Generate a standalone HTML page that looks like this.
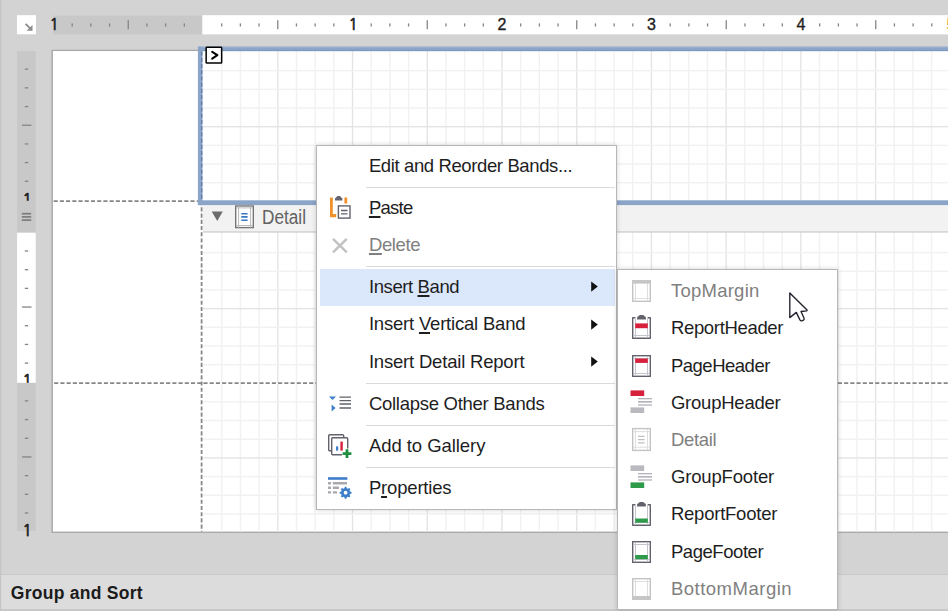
<!DOCTYPE html>
<html lang="en"><head><meta charset="utf-8"><title>Report Designer - Insert Band</title>
<style>
html,body{margin:0;padding:0;}
body{width:948px;height:611px;overflow:hidden;background:#d3d3d3;position:relative;font-family:"Liberation Sans",sans-serif;font-size:18px;color:#1e1e1e;}
.bg{position:absolute;left:0;top:0;display:block;}
.abs{position:absolute;}
.menu{position:absolute;background:#fff;border:1.5px solid #b7b7b7;box-sizing:border-box;box-shadow:0 0 5px rgba(0,0,0,0.17);}
.row{position:absolute;left:0;height:22px;line-height:22px;white-space:nowrap;font-size:18.5px;}
.t{display:inline-block;}
.dis{color:#808080;}
.sep{position:absolute;height:1px;background:#dadada;}
.hl{position:absolute;background:#dbe7fb;}
.ico{position:absolute;display:block;line-height:0;}
.ico svg{display:block;}
.arrow{position:absolute;width:0;height:0;border-left:6.5px solid #111;border-top:5.5px solid transparent;border-bottom:5.5px solid transparent;}
u{text-decoration:underline;text-decoration-thickness:1.5px;text-underline-offset:2.2px;}
</style></head><body>
<svg class="bg" width="948" height="611" viewBox="0 0 948 611" shape-rendering="auto"><rect x="51.5" y="49.8" width="897" height="483.1" fill="#a6a6a6"/>
<rect x="52.9" y="51" width="896" height="480.6" fill="#ffffff"/>
<rect x="221.08" y="51" width="1.4" height="149" fill="#f1f1f1"/>
<rect x="239.76" y="51" width="1.4" height="149" fill="#f1f1f1"/>
<rect x="258.44" y="51" width="1.4" height="149" fill="#f1f1f1"/>
<rect x="277.12" y="51" width="1.4" height="149" fill="#e4e4e4"/>
<rect x="295.80" y="51" width="1.4" height="149" fill="#f1f1f1"/>
<rect x="314.48" y="51" width="1.4" height="149" fill="#f1f1f1"/>
<rect x="333.16" y="51" width="1.4" height="149" fill="#f1f1f1"/>
<rect x="351.84" y="51" width="1.4" height="149" fill="#e4e4e4"/>
<rect x="370.52" y="51" width="1.4" height="149" fill="#f1f1f1"/>
<rect x="389.20" y="51" width="1.4" height="149" fill="#f1f1f1"/>
<rect x="407.88" y="51" width="1.4" height="149" fill="#f1f1f1"/>
<rect x="426.56" y="51" width="1.4" height="149" fill="#e4e4e4"/>
<rect x="445.24" y="51" width="1.4" height="149" fill="#f1f1f1"/>
<rect x="463.92" y="51" width="1.4" height="149" fill="#f1f1f1"/>
<rect x="482.60" y="51" width="1.4" height="149" fill="#f1f1f1"/>
<rect x="501.28" y="51" width="1.4" height="149" fill="#e4e4e4"/>
<rect x="519.96" y="51" width="1.4" height="149" fill="#f1f1f1"/>
<rect x="538.64" y="51" width="1.4" height="149" fill="#f1f1f1"/>
<rect x="557.32" y="51" width="1.4" height="149" fill="#f1f1f1"/>
<rect x="576.00" y="51" width="1.4" height="149" fill="#e4e4e4"/>
<rect x="594.68" y="51" width="1.4" height="149" fill="#f1f1f1"/>
<rect x="613.36" y="51" width="1.4" height="149" fill="#f1f1f1"/>
<rect x="632.04" y="51" width="1.4" height="149" fill="#f1f1f1"/>
<rect x="650.72" y="51" width="1.4" height="149" fill="#e4e4e4"/>
<rect x="669.40" y="51" width="1.4" height="149" fill="#f1f1f1"/>
<rect x="688.08" y="51" width="1.4" height="149" fill="#f1f1f1"/>
<rect x="706.76" y="51" width="1.4" height="149" fill="#f1f1f1"/>
<rect x="725.44" y="51" width="1.4" height="149" fill="#e4e4e4"/>
<rect x="744.12" y="51" width="1.4" height="149" fill="#f1f1f1"/>
<rect x="762.80" y="51" width="1.4" height="149" fill="#f1f1f1"/>
<rect x="781.48" y="51" width="1.4" height="149" fill="#f1f1f1"/>
<rect x="800.16" y="51" width="1.4" height="149" fill="#e4e4e4"/>
<rect x="818.84" y="51" width="1.4" height="149" fill="#f1f1f1"/>
<rect x="837.52" y="51" width="1.4" height="149" fill="#f1f1f1"/>
<rect x="856.20" y="51" width="1.4" height="149" fill="#f1f1f1"/>
<rect x="874.88" y="51" width="1.4" height="149" fill="#e4e4e4"/>
<rect x="893.56" y="51" width="1.4" height="149" fill="#f1f1f1"/>
<rect x="912.24" y="51" width="1.4" height="149" fill="#f1f1f1"/>
<rect x="930.92" y="51" width="1.4" height="149" fill="#f1f1f1"/>
<rect x="203" y="69.98" width="745" height="1.4" fill="#f1f1f1"/>
<rect x="203" y="88.66" width="745" height="1.4" fill="#f1f1f1"/>
<rect x="203" y="107.34" width="745" height="1.4" fill="#f1f1f1"/>
<rect x="203" y="126.02" width="745" height="1.4" fill="#e4e4e4"/>
<rect x="203" y="144.70" width="745" height="1.4" fill="#f1f1f1"/>
<rect x="203" y="163.38" width="745" height="1.4" fill="#f1f1f1"/>
<rect x="203" y="182.06" width="745" height="1.4" fill="#f1f1f1"/>
<rect x="221.08" y="232" width="1.4" height="151" fill="#f1f1f1"/>
<rect x="239.76" y="232" width="1.4" height="151" fill="#f1f1f1"/>
<rect x="258.44" y="232" width="1.4" height="151" fill="#f1f1f1"/>
<rect x="277.12" y="232" width="1.4" height="151" fill="#e4e4e4"/>
<rect x="295.80" y="232" width="1.4" height="151" fill="#f1f1f1"/>
<rect x="314.48" y="232" width="1.4" height="151" fill="#f1f1f1"/>
<rect x="333.16" y="232" width="1.4" height="151" fill="#f1f1f1"/>
<rect x="351.84" y="232" width="1.4" height="151" fill="#e4e4e4"/>
<rect x="370.52" y="232" width="1.4" height="151" fill="#f1f1f1"/>
<rect x="389.20" y="232" width="1.4" height="151" fill="#f1f1f1"/>
<rect x="407.88" y="232" width="1.4" height="151" fill="#f1f1f1"/>
<rect x="426.56" y="232" width="1.4" height="151" fill="#e4e4e4"/>
<rect x="445.24" y="232" width="1.4" height="151" fill="#f1f1f1"/>
<rect x="463.92" y="232" width="1.4" height="151" fill="#f1f1f1"/>
<rect x="482.60" y="232" width="1.4" height="151" fill="#f1f1f1"/>
<rect x="501.28" y="232" width="1.4" height="151" fill="#e4e4e4"/>
<rect x="519.96" y="232" width="1.4" height="151" fill="#f1f1f1"/>
<rect x="538.64" y="232" width="1.4" height="151" fill="#f1f1f1"/>
<rect x="557.32" y="232" width="1.4" height="151" fill="#f1f1f1"/>
<rect x="576.00" y="232" width="1.4" height="151" fill="#e4e4e4"/>
<rect x="594.68" y="232" width="1.4" height="151" fill="#f1f1f1"/>
<rect x="613.36" y="232" width="1.4" height="151" fill="#f1f1f1"/>
<rect x="632.04" y="232" width="1.4" height="151" fill="#f1f1f1"/>
<rect x="650.72" y="232" width="1.4" height="151" fill="#e4e4e4"/>
<rect x="669.40" y="232" width="1.4" height="151" fill="#f1f1f1"/>
<rect x="688.08" y="232" width="1.4" height="151" fill="#f1f1f1"/>
<rect x="706.76" y="232" width="1.4" height="151" fill="#f1f1f1"/>
<rect x="725.44" y="232" width="1.4" height="151" fill="#e4e4e4"/>
<rect x="744.12" y="232" width="1.4" height="151" fill="#f1f1f1"/>
<rect x="762.80" y="232" width="1.4" height="151" fill="#f1f1f1"/>
<rect x="781.48" y="232" width="1.4" height="151" fill="#f1f1f1"/>
<rect x="800.16" y="232" width="1.4" height="151" fill="#e4e4e4"/>
<rect x="818.84" y="232" width="1.4" height="151" fill="#f1f1f1"/>
<rect x="837.52" y="232" width="1.4" height="151" fill="#f1f1f1"/>
<rect x="856.20" y="232" width="1.4" height="151" fill="#f1f1f1"/>
<rect x="874.88" y="232" width="1.4" height="151" fill="#e4e4e4"/>
<rect x="893.56" y="232" width="1.4" height="151" fill="#f1f1f1"/>
<rect x="912.24" y="232" width="1.4" height="151" fill="#f1f1f1"/>
<rect x="930.92" y="232" width="1.4" height="151" fill="#f1f1f1"/>
<rect x="203" y="251.88" width="745" height="1.4" fill="#f1f1f1"/>
<rect x="203" y="270.56" width="745" height="1.4" fill="#f1f1f1"/>
<rect x="203" y="289.24" width="745" height="1.4" fill="#f1f1f1"/>
<rect x="203" y="307.92" width="745" height="1.4" fill="#e4e4e4"/>
<rect x="203" y="326.60" width="745" height="1.4" fill="#f1f1f1"/>
<rect x="203" y="345.28" width="745" height="1.4" fill="#f1f1f1"/>
<rect x="203" y="363.96" width="745" height="1.4" fill="#f1f1f1"/>
<rect x="221.08" y="384" width="1.4" height="147.60000000000002" fill="#f1f1f1"/>
<rect x="239.76" y="384" width="1.4" height="147.60000000000002" fill="#f1f1f1"/>
<rect x="258.44" y="384" width="1.4" height="147.60000000000002" fill="#f1f1f1"/>
<rect x="277.12" y="384" width="1.4" height="147.60000000000002" fill="#e4e4e4"/>
<rect x="295.80" y="384" width="1.4" height="147.60000000000002" fill="#f1f1f1"/>
<rect x="314.48" y="384" width="1.4" height="147.60000000000002" fill="#f1f1f1"/>
<rect x="333.16" y="384" width="1.4" height="147.60000000000002" fill="#f1f1f1"/>
<rect x="351.84" y="384" width="1.4" height="147.60000000000002" fill="#e4e4e4"/>
<rect x="370.52" y="384" width="1.4" height="147.60000000000002" fill="#f1f1f1"/>
<rect x="389.20" y="384" width="1.4" height="147.60000000000002" fill="#f1f1f1"/>
<rect x="407.88" y="384" width="1.4" height="147.60000000000002" fill="#f1f1f1"/>
<rect x="426.56" y="384" width="1.4" height="147.60000000000002" fill="#e4e4e4"/>
<rect x="445.24" y="384" width="1.4" height="147.60000000000002" fill="#f1f1f1"/>
<rect x="463.92" y="384" width="1.4" height="147.60000000000002" fill="#f1f1f1"/>
<rect x="482.60" y="384" width="1.4" height="147.60000000000002" fill="#f1f1f1"/>
<rect x="501.28" y="384" width="1.4" height="147.60000000000002" fill="#e4e4e4"/>
<rect x="519.96" y="384" width="1.4" height="147.60000000000002" fill="#f1f1f1"/>
<rect x="538.64" y="384" width="1.4" height="147.60000000000002" fill="#f1f1f1"/>
<rect x="557.32" y="384" width="1.4" height="147.60000000000002" fill="#f1f1f1"/>
<rect x="576.00" y="384" width="1.4" height="147.60000000000002" fill="#e4e4e4"/>
<rect x="594.68" y="384" width="1.4" height="147.60000000000002" fill="#f1f1f1"/>
<rect x="613.36" y="384" width="1.4" height="147.60000000000002" fill="#f1f1f1"/>
<rect x="632.04" y="384" width="1.4" height="147.60000000000002" fill="#f1f1f1"/>
<rect x="650.72" y="384" width="1.4" height="147.60000000000002" fill="#e4e4e4"/>
<rect x="669.40" y="384" width="1.4" height="147.60000000000002" fill="#f1f1f1"/>
<rect x="688.08" y="384" width="1.4" height="147.60000000000002" fill="#f1f1f1"/>
<rect x="706.76" y="384" width="1.4" height="147.60000000000002" fill="#f1f1f1"/>
<rect x="725.44" y="384" width="1.4" height="147.60000000000002" fill="#e4e4e4"/>
<rect x="744.12" y="384" width="1.4" height="147.60000000000002" fill="#f1f1f1"/>
<rect x="762.80" y="384" width="1.4" height="147.60000000000002" fill="#f1f1f1"/>
<rect x="781.48" y="384" width="1.4" height="147.60000000000002" fill="#f1f1f1"/>
<rect x="800.16" y="384" width="1.4" height="147.60000000000002" fill="#e4e4e4"/>
<rect x="818.84" y="384" width="1.4" height="147.60000000000002" fill="#f1f1f1"/>
<rect x="837.52" y="384" width="1.4" height="147.60000000000002" fill="#f1f1f1"/>
<rect x="856.20" y="384" width="1.4" height="147.60000000000002" fill="#f1f1f1"/>
<rect x="874.88" y="384" width="1.4" height="147.60000000000002" fill="#e4e4e4"/>
<rect x="893.56" y="384" width="1.4" height="147.60000000000002" fill="#f1f1f1"/>
<rect x="912.24" y="384" width="1.4" height="147.60000000000002" fill="#f1f1f1"/>
<rect x="930.92" y="384" width="1.4" height="147.60000000000002" fill="#f1f1f1"/>
<rect x="203" y="401.18" width="745" height="1.4" fill="#f1f1f1"/>
<rect x="203" y="419.86" width="745" height="1.4" fill="#f1f1f1"/>
<rect x="203" y="438.54" width="745" height="1.4" fill="#f1f1f1"/>
<rect x="203" y="457.22" width="745" height="1.4" fill="#e4e4e4"/>
<rect x="203" y="475.90" width="745" height="1.4" fill="#f1f1f1"/>
<rect x="203" y="494.58" width="745" height="1.4" fill="#f1f1f1"/>
<rect x="203" y="513.26" width="745" height="1.4" fill="#f1f1f1"/>
<rect x="203" y="205" width="745" height="27" fill="#f2f2f2"/>
<rect x="203" y="231.2" width="745" height="1.5" fill="#d2d2d2"/>
<line x1="201.6" y1="205.1" x2="201.6" y2="531.4" stroke="#868686" stroke-width="1.75" stroke-dasharray="4.1 2.12" stroke-dashoffset="3.96"/>
<line x1="53" y1="201.2" x2="198" y2="201.2" stroke="#868686" stroke-width="1.75" stroke-dasharray="4.1 2.12" stroke-dashoffset="5.6"/>
<line x1="53" y1="383.2" x2="948" y2="383.2" stroke="#868686" stroke-width="1.75" stroke-dasharray="4.1 2.12" stroke-dashoffset="5.06"/>
<rect x="198" y="46.7" width="750" height="4.4" fill="#8ba5c9"/>
<rect x="202.5" y="49.9" width="746" height="1.2" fill="#7f98be"/>
<rect x="198" y="46.7" width="750" height="1.1" fill="#9bb0cf"/>
<rect x="197.9" y="46.7" width="4.6" height="158.4" fill="#8ba5c9"/>
<rect x="197.9" y="200.3" width="751" height="4.8" fill="#8ba5c9"/>
<line x1="201.7" y1="51.5" x2="201.7" y2="200.4" stroke="#5f7ba6" stroke-width="1.3" stroke-dasharray="4.1 2.12"/>
<rect x="206.15" y="47.3" width="15.5" height="15.7" rx="0.6" fill="#fff" stroke="#000" stroke-width="1.5"/>
<path d="M212.2 51.8 L217.4 55.2 L212.2 58.6" fill="none" stroke="#000" stroke-width="2" stroke-linejoin="round" stroke-linecap="round"/>
<path d="M211.7 211.5 L222.8 211.5 L217.25 221 Z" fill="#6c6c6c"/>
<g transform="translate(235,205.3)"><rect x="0.7" y="0.7" width="17.6" height="21.6" fill="#fff" stroke="#727272" stroke-width="1.35"/><path d="M3.6 1 V22.4 M15.6 1 V22.4 M1 2.6 H18 M1 20.2 H18" stroke="#b9b9b9" stroke-width="1" fill="none"/><path d="M6.3 8.4 H12.6 M6.3 11.6 H12.6 M6.3 14.9 H12.6" stroke="#3b78c4" stroke-width="1.6" fill="none"/></g>
<rect x="17" y="15.2" width="19" height="19.1" fill="#fff"/>
<path d="M25.6 23.9 L30.6 28.9" fill="none" stroke="#8c8c8c" stroke-width="1.9"/>
<path d="M32.5 24.9 V30.7 H26.5 Z" fill="#8c8c8c"/>
<rect x="53" y="15.6" width="149.3" height="18.8" fill="#c8c8c8"/>
<rect x="202.3" y="15.2" width="746" height="19.2" fill="#fff"/>
<rect x="17.1" y="51.2" width="18.6" height="181.5" fill="#c8c8c8"/>
<rect x="17.1" y="232.7" width="18.6" height="150.2" fill="#fff"/>
<rect x="17.1" y="382.9" width="18.6" height="148.1" fill="#c8c8c8"/>
<defs><clipPath id="c1"><rect x="10" y="180" width="40" height="20.7"/></clipPath><clipPath id="c2"><rect x="10" y="360" width="40" height="22.7"/></clipPath></defs>
<text x="54.1" y="29.6" font-family="NanumGothic, Liberation Sans, sans-serif" font-size="15.5" fill="#222" stroke="#222" stroke-width="0.7" text-anchor="middle">1</text>
<rect x="71.54" y="23.4" width="1.3" height="3.1" fill="#858585"/>
<rect x="90.22" y="23.4" width="1.3" height="3.1" fill="#858585"/>
<rect x="108.91" y="23.4" width="1.3" height="3.1" fill="#858585"/>
<rect x="127.60" y="20.2" width="1.3" height="9" fill="#858585"/>
<rect x="146.29" y="23.4" width="1.3" height="3.1" fill="#858585"/>
<rect x="164.97" y="23.4" width="1.3" height="3.1" fill="#858585"/>
<rect x="183.66" y="23.4" width="1.3" height="3.1" fill="#858585"/>
<rect x="221.04" y="23.4" width="1.3" height="3.1" fill="#858585"/>
<rect x="239.72" y="23.4" width="1.3" height="3.1" fill="#858585"/>
<rect x="258.41" y="23.4" width="1.3" height="3.1" fill="#858585"/>
<rect x="277.10" y="20.2" width="1.3" height="9" fill="#858585"/>
<rect x="295.79" y="23.4" width="1.3" height="3.1" fill="#858585"/>
<rect x="314.48" y="23.4" width="1.3" height="3.1" fill="#858585"/>
<rect x="333.16" y="23.4" width="1.3" height="3.1" fill="#858585"/>
<text x="353.1" y="29.6" font-family="NanumGothic, Liberation Sans, sans-serif" font-size="15.5" fill="#222" stroke="#222" stroke-width="0.7" text-anchor="middle">1</text>
<rect x="370.54" y="23.4" width="1.3" height="3.1" fill="#858585"/>
<rect x="389.23" y="23.4" width="1.3" height="3.1" fill="#858585"/>
<rect x="407.91" y="23.4" width="1.3" height="3.1" fill="#858585"/>
<rect x="426.60" y="20.2" width="1.3" height="9" fill="#858585"/>
<rect x="445.29" y="23.4" width="1.3" height="3.1" fill="#858585"/>
<rect x="463.98" y="23.4" width="1.3" height="3.1" fill="#858585"/>
<rect x="482.66" y="23.4" width="1.3" height="3.1" fill="#858585"/>
<text x="502.0" y="29.6" font-family="Liberation Sans, sans-serif" font-size="16" fill="#222" stroke="#222" stroke-width="0.35" text-anchor="middle">2</text>
<rect x="520.04" y="23.4" width="1.3" height="3.1" fill="#858585"/>
<rect x="538.73" y="23.4" width="1.3" height="3.1" fill="#858585"/>
<rect x="557.41" y="23.4" width="1.3" height="3.1" fill="#858585"/>
<rect x="576.10" y="20.2" width="1.3" height="9" fill="#858585"/>
<rect x="594.79" y="23.4" width="1.3" height="3.1" fill="#858585"/>
<rect x="613.48" y="23.4" width="1.3" height="3.1" fill="#858585"/>
<rect x="632.16" y="23.4" width="1.3" height="3.1" fill="#858585"/>
<text x="651.5" y="29.6" font-family="Liberation Sans, sans-serif" font-size="16" fill="#222" stroke="#222" stroke-width="0.35" text-anchor="middle">3</text>
<rect x="669.54" y="23.4" width="1.3" height="3.1" fill="#858585"/>
<rect x="688.23" y="23.4" width="1.3" height="3.1" fill="#858585"/>
<rect x="706.91" y="23.4" width="1.3" height="3.1" fill="#858585"/>
<rect x="725.60" y="20.2" width="1.3" height="9" fill="#858585"/>
<rect x="744.29" y="23.4" width="1.3" height="3.1" fill="#858585"/>
<rect x="762.98" y="23.4" width="1.3" height="3.1" fill="#858585"/>
<rect x="781.66" y="23.4" width="1.3" height="3.1" fill="#858585"/>
<text x="801.0" y="29.6" font-family="Liberation Sans, sans-serif" font-size="16" fill="#222" stroke="#222" stroke-width="0.35" text-anchor="middle">4</text>
<rect x="819.04" y="23.4" width="1.3" height="3.1" fill="#858585"/>
<rect x="837.73" y="23.4" width="1.3" height="3.1" fill="#858585"/>
<rect x="856.41" y="23.4" width="1.3" height="3.1" fill="#858585"/>
<rect x="875.10" y="20.2" width="1.3" height="9" fill="#858585"/>
<rect x="893.79" y="23.4" width="1.3" height="3.1" fill="#858585"/>
<rect x="912.48" y="23.4" width="1.3" height="3.1" fill="#858585"/>
<rect x="931.16" y="23.4" width="1.3" height="3.1" fill="#858585"/>
<text x="951.0" y="29.6" font-family="Liberation Sans, sans-serif" font-size="16" fill="#e9a23b" stroke="#e9a23b" stroke-width="0.35" text-anchor="middle">5</text>
<rect x="24.8" y="68.54" width="3.4" height="1.3" fill="#858585"/>
<rect x="24.8" y="87.22" width="3.4" height="1.3" fill="#858585"/>
<rect x="24.8" y="105.91" width="3.4" height="1.3" fill="#858585"/>
<rect x="22" y="124.60" width="9.5" height="1.3" fill="#858585"/>
<rect x="24.8" y="143.29" width="3.4" height="1.3" fill="#858585"/>
<rect x="24.8" y="161.97" width="3.4" height="1.3" fill="#858585"/>
<rect x="24.8" y="180.66" width="3.4" height="1.3" fill="#858585"/>
<g clip-path="url(#c1)"><text x="27.1" y="204.6" font-family="NanumGothic, Liberation Sans, sans-serif" font-size="15.5" fill="#222" stroke="#222" stroke-width="0.75" text-anchor="middle">1</text></g>
<rect x="24.8" y="250.34" width="3.4" height="1.3" fill="#858585"/>
<rect x="24.8" y="269.03" width="3.4" height="1.3" fill="#858585"/>
<rect x="24.8" y="287.71" width="3.4" height="1.3" fill="#858585"/>
<rect x="22" y="306.40" width="9.5" height="1.3" fill="#858585"/>
<rect x="24.8" y="325.09" width="3.4" height="1.3" fill="#858585"/>
<rect x="24.8" y="343.78" width="3.4" height="1.3" fill="#858585"/>
<rect x="24.8" y="362.46" width="3.4" height="1.3" fill="#858585"/>
<g clip-path="url(#c2)"><text x="27.1" y="386.4" font-family="NanumGothic, Liberation Sans, sans-serif" font-size="15.5" fill="#222" stroke="#222" stroke-width="0.75" text-anchor="middle">1</text></g>
<rect x="24.8" y="400.24" width="3.4" height="1.3" fill="#858585"/>
<rect x="24.8" y="418.93" width="3.4" height="1.3" fill="#858585"/>
<rect x="24.8" y="437.61" width="3.4" height="1.3" fill="#858585"/>
<rect x="22" y="456.30" width="9.5" height="1.3" fill="#858585"/>
<rect x="24.8" y="474.99" width="3.4" height="1.3" fill="#858585"/>
<rect x="24.8" y="493.68" width="3.4" height="1.3" fill="#858585"/>
<rect x="24.8" y="512.36" width="3.4" height="1.3" fill="#858585"/>
<g><text x="27.1" y="536.3" font-family="NanumGothic, Liberation Sans, sans-serif" font-size="15.5" fill="#222" stroke="#222" stroke-width="0.75" text-anchor="middle">1</text></g>
<rect x="21.8" y="212.85" width="9.4" height="1.7" fill="#7c7c7c"/>
<rect x="21.8" y="216.05" width="9.4" height="1.7" fill="#7c7c7c"/>
<rect x="21.8" y="219.25" width="9.4" height="1.7" fill="#7c7c7c"/>
<rect x="0" y="574" width="948" height="1" fill="#c9c9c9"/>
<rect x="0" y="575" width="948" height="34" fill="#dcdcdc"/>
<rect x="0" y="609.2" width="948" height="2" fill="#c6c6c6"/>
<rect x="0" y="0" width="1.25" height="611" fill="#c5c5c5"/></svg>
<div class="abs" style="left:262.4px;top:203.9px;height:27px;line-height:26px;font-size:19.6px;color:#626262;white-space:nowrap;transform:scaleX(0.878);transform-origin:0 50%">Detail</div>
<div class="abs" style="left:10.8px;top:580.8px;height:24px;line-height:24px;font-weight:bold;font-size:17.5px;color:#1b1b1b;letter-spacing:0.27px">Group and Sort</div>

<div class="menu" style="left:315.9px;top:144.9px;width:301.6px;height:364.9px"></div>
<div class="hl" style="left:319.6px;top:269.1px;width:295.2px;height:36.7px"></div>
<div class="sep" style="left:366px;top:187.1px;width:248.70000000000005px"></div>
<div class="sep" style="left:366px;top:266.3px;width:248.70000000000005px"></div>
<div class="sep" style="left:366px;top:383.2px;width:248.70000000000005px"></div>
<div class="sep" style="left:366px;top:425.2px;width:248.70000000000005px"></div>
<div class="sep" style="left:366px;top:467.2px;width:248.70000000000005px"></div>
<div class="row" style="left:368.9px;top:154.7px"><span class="t" style="letter-spacing:-0.382px">Edit and Reorder Bands...</span></div>
<div class="row" style="left:368.9px;top:196.8px"><span class="t" style="letter-spacing:-0.736px"><u>P</u>aste</span></div>
<div class="ico" style="left:330px;top:196px"><svg width="22" height="24" viewBox="0 0 22 24"><path d="M0 1.5 H2.8 V18 H6.2 V21.2 H0 Z" fill="#f0912b"/><rect x="14.4" y="1.5" width="2.8" height="6" fill="#f0912b"/><path d="M5 4.4 V2.6 Q5 1.8 6 1.7 L6.5 0.9 Q6.9 0.1 7.9 0.1 H9.5 Q10.5 0.1 10.9 0.9 L11.4 1.7 Q12.4 1.8 12.4 2.6 V4.4 Z" fill="#65656f"/><rect x="8.4" y="9.9" width="11.6" height="12.2" fill="#fff" stroke="#62626c" stroke-width="1.4"/><path d="M11 14.5 H17.5 M11 17.8 H17.5" stroke="#62626c" stroke-width="1.3"/></svg></div>
<div class="row dis" style="left:368.9px;top:234.2px"><span class="t" style="letter-spacing:-0.374px"><u>D</u>elete</span></div>
<div class="ico" style="left:330.5px;top:237px"><svg width="18" height="18" viewBox="0 0 18 18"><path d="M2 1.9 L15.8 15.3 M15.8 1.9 L2 15.3" stroke="#c2c2c2" stroke-width="2.5" fill="none"/></svg></div>
<div class="row" style="left:368.9px;top:276.4px"><span class="t" style="letter-spacing:-0.396px">Insert <u>B</u>and</span></div>
<div class="ico" style="left:590px;top:280.2px"><svg width="10" height="14" viewBox="0 0 10 14"><path d="M1.2 1.4 L7.8 6.6 L1.2 11.8 Z" fill="#111"/></svg></div>
<div class="row" style="left:368.9px;top:312.8px"><span class="t" style="letter-spacing:-0.197px">Insert <u>V</u>ertical Band</span></div>
<div class="ico" style="left:590px;top:317.6px"><svg width="10" height="14" viewBox="0 0 10 14"><path d="M1.2 1.4 L7.8 6.6 L1.2 11.8 Z" fill="#111"/></svg></div>
<div class="row" style="left:368.9px;top:351.2px"><span class="t" style="letter-spacing:-0.195px">Insert Detail Report</span></div>
<div class="ico" style="left:590px;top:355.0px"><svg width="10" height="14" viewBox="0 0 10 14"><path d="M1.2 1.4 L7.8 6.6 L1.2 11.8 Z" fill="#111"/></svg></div>
<div class="row" style="left:368.9px;top:393.0px"><span class="t" style="letter-spacing:-0.275px">Collapse Other Bands</span></div>
<div class="ico" style="left:328.6px;top:396.2px"><svg width="23" height="16" viewBox="0 0 23 16"><path d="M0 0.6 H7 L3.5 4 Z" fill="#3d7ecb"/><path d="M2.6 8.4 L6.6 12 L2.6 15.6 Z" fill="#3d7ecb"/><path d="M10.5 1.2 H22 M10.5 4.6 H22 M10.5 8 H22 M10.5 12 H22" stroke="#62626c" stroke-width="1.3"/></svg></div>
<div class="row" style="left:368.9px;top:435.0px"><span class="t" style="letter-spacing:-0.055px">Add to Gallery</span></div>
<div class="ico" style="left:328.2px;top:433.6px"><svg width="24" height="25" viewBox="0 0 24 25"><rect x="0.7" y="0.7" width="15" height="16" rx="1" fill="#fff" stroke="#62626c" stroke-width="1.4"/><rect x="3.7" y="3.7" width="16" height="17" rx="1" fill="#fff" stroke="#62626c" stroke-width="1.4"/><rect x="8" y="12.4" width="2.2" height="4.2" fill="#3d7ecb"/><rect x="12.4" y="7.6" width="2.4" height="9" fill="#d6203c"/><path d="M19 14.6 V24.6 M14 19.6 H24" stroke="#fff" stroke-width="4.8"/><path d="M19 15.2 V24 M14.6 19.6 H23.4" stroke="#1f8f3f" stroke-width="2.8"/></svg></div>
<div class="row" style="left:368.9px;top:477.0px"><span class="t" style="letter-spacing:-0.178px">P<u>r</u>operties</span></div>
<div class="ico" style="left:328px;top:476.8px"><svg width="25" height="24" viewBox="0 0 25 24"><rect x="0" y="0.2" width="19.4" height="2.6" fill="#3d7ecb"/><path d="M0 6.2 H3 M4.8 6.2 H19 M0 10.8 H3 M4.8 10.8 H11 M0 15.4 H3 M4.8 15.4 H9" stroke="#a8a8ae" stroke-width="2.4"/><circle cx="17.6" cy="15.7" r="7.2" fill="#fff"/><path d="M23.55 14.92 L23.55 16.48 L22.04 16.90 L21.59 17.99 L22.36 19.36 L21.26 20.46 L19.89 19.69 L18.80 20.14 L18.38 21.65 L16.82 21.65 L16.40 20.14 L15.31 19.69 L13.94 20.46 L12.84 19.36 L13.61 17.99 L13.16 16.90 L11.65 16.48 L11.65 14.92 L13.16 14.50 L13.61 13.41 L12.84 12.04 L13.94 10.94 L15.31 11.71 L16.40 11.26 L16.82 9.75 L18.38 9.75 L18.80 11.26 L19.89 11.71 L21.26 10.94 L22.36 12.04 L21.59 13.41 L22.04 14.50 Z M19.50 15.70 A1.9 1.9 0 1 0 15.70 15.70 A1.9 1.9 0 1 0 19.50 15.70 Z" fill="#3d7ecb" fill-rule="evenodd"/></svg></div>
<div class="menu" style="left:617px;top:269.2px;width:220.8px;height:340.4px"></div>
<div class="row dis" style="left:670.9px;top:280.0px"><span class="t" style="letter-spacing:0.252px">TopMargin</span></div>
<div class="ico" style="left:632px;top:277.1px"><svg width="20" height="26" viewBox="0 0 20 26"><rect x="0.7" y="3.7" width="17.6" height="20.6" fill="#fff" stroke="#c3c3c3" stroke-width="1.4"/><path d="M3.5 4.4 V23.6 M15.5 4.4 V23.6 M1.4 21.5 H17.6" stroke="#dedede" stroke-width="1" fill="none"/><rect x="0" y="3" width="19" height="3.6" fill="#c6c6c6"/></svg></div>
<div class="row" style="left:670.9px;top:317.3px"><span class="t" style="letter-spacing:-0.328px">ReportHeader</span></div>
<div class="ico" style="left:632px;top:314.4px"><svg width="20" height="26" viewBox="0 0 20 26"><rect x="0.7" y="3.7" width="17.6" height="20.6" fill="#fff"/><path d="M3.4 3.7 H0.7 V24.3 H18.3 V3.7 H15.6" fill="none" stroke="#62626c" stroke-width="1.4" stroke-linejoin="round"/><path d="M3.5 4.4 V23.6 M15.5 4.4 V23.6 M1.4 21.5 H17.6" stroke="#c4c4cc" stroke-width="1" fill="none"/><path d="M5.1 5.6 V3.6 Q5.1 2.8 6.2 2.6 L6.8 1.8 Q7.2 1.1 8.2 1.1 H10.8 Q11.8 1.1 12.2 1.8 L12.8 2.6 Q13.9 2.8 13.9 3.6 V5.6 Z" fill="#62626c"/><rect x="3.2" y="9.4" width="12.6" height="4.8" fill="#d6203c"/></svg></div>
<div class="row" style="left:670.9px;top:354.6px"><span class="t" style="letter-spacing:-0.491px">PageHeader</span></div>
<div class="ico" style="left:632px;top:351.7px"><svg width="20" height="26" viewBox="0 0 20 26"><rect x="0.7" y="3.7" width="17.6" height="20.6" fill="#fff" stroke="#62626c" stroke-width="1.4"/><path d="M3.5 4.4 V23.6 M15.5 4.4 V23.6 M1.4 21.5 H17.6 M1.4 6.5 H17.6" stroke="#c4c4cc" stroke-width="1" fill="none"/><rect x="3.2" y="6.5" width="12.6" height="4.4" fill="#d6203c"/></svg></div>
<div class="row" style="left:670.9px;top:391.9px"><span class="t" style="letter-spacing:-0.221px">GroupHeader</span></div>
<div class="ico" style="left:630px;top:389.1px"><svg width="23" height="26" viewBox="0 0 23 26"><rect x="0.5" y="1.4" width="13.7" height="5.6" fill="#d6203c"/><path d="M8 9.8 H22 M8 12.9 H22 M8 16 H22" stroke="#9c9ca6" stroke-width="1.1" fill="none"/><rect x="0.5" y="18.4" width="13.7" height="5.6" fill="#b9b9bf"/></svg></div>
<div class="row dis" style="left:670.9px;top:429.2px"><span class="t" style="letter-spacing:-0.296px">Detail</span></div>
<div class="ico" style="left:632px;top:426.3px"><svg width="20" height="26" viewBox="0 0 20 26"><rect x="0.7" y="2.6" width="17.6" height="21.8" fill="#fff" stroke="#c3c3c3" stroke-width="1.4"/><path d="M3.5 3.2 V23.8 M15.5 3.2 V23.8 M1.4 21.2 H17.6 M1.4 5.6 H17.6" stroke="#dedede" stroke-width="1" fill="none"/><path d="M6 10.4 H12.6 M6 13.6 H12.6 M6 16.8 H12.6" stroke="#c0c0c0" stroke-width="1.2" fill="none"/></svg></div>
<div class="row" style="left:670.9px;top:465.5px"><span class="t" style="letter-spacing:-0.149px">GroupFooter</span></div>
<div class="ico" style="left:630px;top:463.7px"><svg width="23" height="26" viewBox="0 0 23 26"><rect x="0.5" y="1.4" width="13.7" height="5.6" fill="#b9b9bf"/><path d="M8 9.8 H22 M8 12.9 H22 M8 16 H22" stroke="#9c9ca6" stroke-width="1.1" fill="none"/><rect x="0.5" y="18.4" width="13.7" height="5.6" fill="#2d9b4a"/></svg></div>
<div class="row" style="left:670.9px;top:502.8px"><span class="t" style="letter-spacing:-0.229px">ReportFooter</span></div>
<div class="ico" style="left:632px;top:500.9px"><svg width="20" height="26" viewBox="0 0 20 26"><rect x="0.7" y="3.7" width="17.6" height="20.6" fill="#fff"/><path d="M3.4 3.7 H0.7 V24.3 H18.3 V3.7 H15.6" fill="none" stroke="#62626c" stroke-width="1.4" stroke-linejoin="round"/><path d="M3.5 4.4 V23.6 M15.5 4.4 V23.6 M1.4 21.5 H17.6" stroke="#c4c4cc" stroke-width="1" fill="none"/><path d="M5.1 5.6 V3.6 Q5.1 2.8 6.2 2.6 L6.8 1.8 Q7.2 1.1 8.2 1.1 H10.8 Q11.8 1.1 12.2 1.8 L12.8 2.6 Q13.9 2.8 13.9 3.6 V5.6 Z" fill="#62626c"/><rect x="3.2" y="17.5" width="12.6" height="4.2" fill="#2d9b4a"/></svg></div>
<div class="row" style="left:670.9px;top:541.1px"><span class="t" style="letter-spacing:-0.441px">PageFooter</span></div>
<div class="ico" style="left:632px;top:538.2px"><svg width="20" height="26" viewBox="0 0 20 26"><rect x="0.7" y="3.7" width="17.6" height="20.6" fill="#fff" stroke="#62626c" stroke-width="1.4"/><path d="M3.5 4.4 V23.6 M15.5 4.4 V23.6 M1.4 21.5 H17.6 M1.4 6.5 H17.6" stroke="#c4c4cc" stroke-width="1" fill="none"/><rect x="3.2" y="17" width="12.6" height="4.2" fill="#2d9b4a"/></svg></div>
<div class="row dis" style="left:670.9px;top:578.4px"><span class="t" style="letter-spacing:0.507px">BottomMargin</span></div>
<div class="ico" style="left:632px;top:574.9px"><svg width="20" height="26" viewBox="0 0 20 26"><rect x="0.7" y="3.7" width="17.6" height="20.6" fill="#fff" stroke="#c3c3c3" stroke-width="1.4"/><path d="M3.5 4.4 V23.6 M15.5 4.4 V23.6 M1.4 21.5 H17.6 M1.4 6.5 H17.6" stroke="#dedede" stroke-width="1" fill="none"/><rect x="0" y="21" width="19" height="4" fill="#c6c6c6"/></svg></div>
<div class="ico" style="left:785px;top:288px"><svg width="30" height="40" viewBox="785 288 30 40"><path d="M789.8 293.0 V317.6 L796.3 312.4 L799.9 319.9 Q801 321.3 802.4 320.6 L803.4 320.1 Q804.6 319.3 804 318 L801 311.5 L806.6 310.9 Q807.6 310.5 806.8 309.7 Z" fill="#fff" stroke="#20202a" stroke-width="1.35" stroke-linejoin="round"/></svg></div>
</body></html>
